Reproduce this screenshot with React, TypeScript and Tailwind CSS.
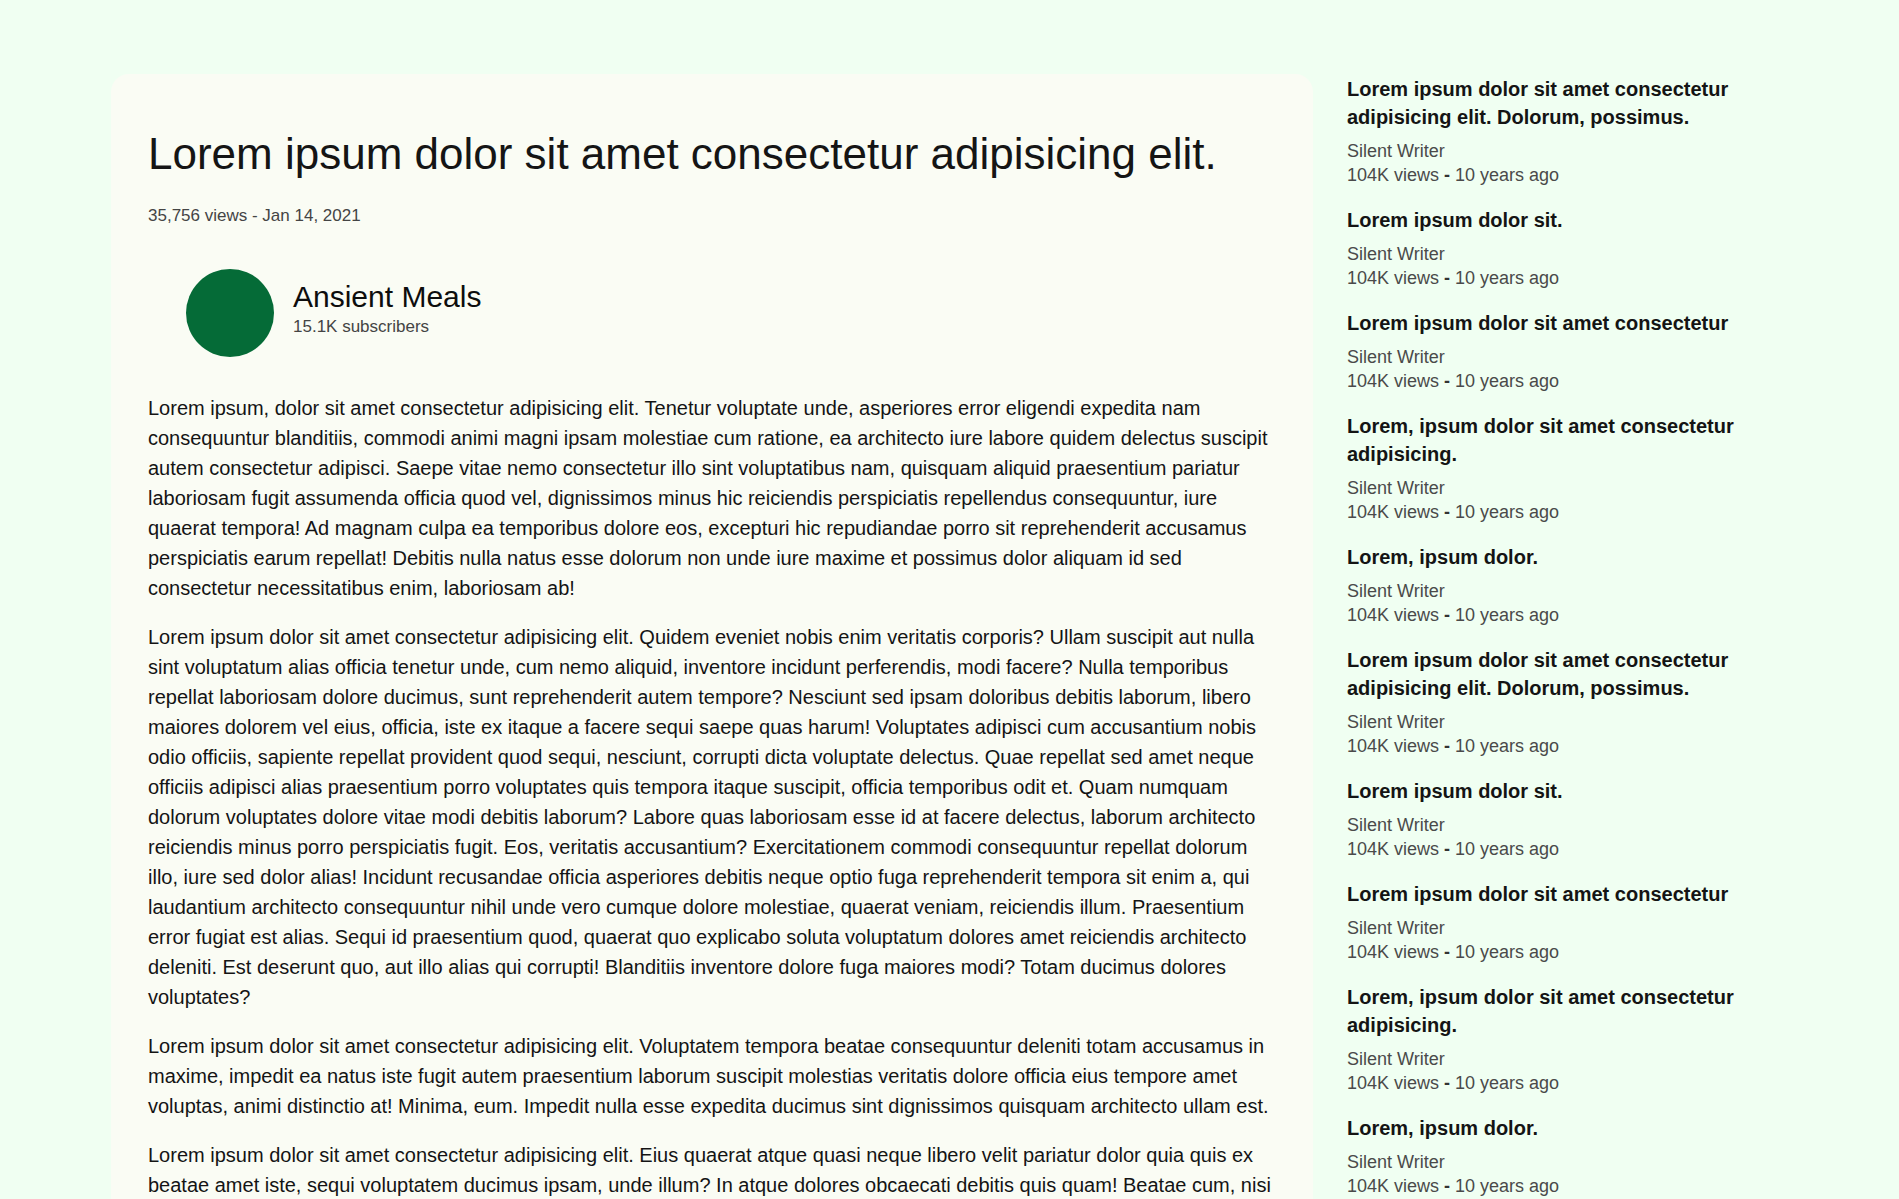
import React from "react";

const paragraphs = [
  "Lorem ipsum, dolor sit amet consectetur adipisicing elit. Tenetur voluptate unde, asperiores error eligendi expedita nam consequuntur blanditiis, commodi animi magni ipsam molestiae cum ratione, ea architecto iure labore quidem delectus suscipit autem consectetur adipisci. Saepe vitae nemo consectetur illo sint voluptatibus nam, quisquam aliquid praesentium pariatur laboriosam fugit assumenda officia quod vel, dignissimos minus hic reiciendis perspiciatis repellendus consequuntur, iure quaerat tempora! Ad magnam culpa ea temporibus dolore eos, excepturi hic repudiandae porro sit reprehenderit accusamus perspiciatis earum repellat! Debitis nulla natus esse dolorum non unde iure maxime et possimus dolor aliquam id sed consectetur necessitatibus enim, laboriosam ab!",
  "Lorem ipsum dolor sit amet consectetur adipisicing elit. Quidem eveniet nobis enim veritatis corporis? Ullam suscipit aut nulla sint voluptatum alias officia tenetur unde, cum nemo aliquid, inventore incidunt perferendis, modi facere? Nulla temporibus repellat laboriosam dolore ducimus, sunt reprehenderit autem tempore? Nesciunt sed ipsam doloribus debitis laborum, libero maiores dolorem vel eius, officia, iste ex itaque a facere sequi saepe quas harum! Voluptates adipisci cum accusantium nobis odio officiis, sapiente repellat provident quod sequi, nesciunt, corrupti dicta voluptate delectus. Quae repellat sed amet neque officiis adipisci alias praesentium porro voluptates quis tempora itaque suscipit, officia temporibus odit et. Quam numquam dolorum voluptates dolore vitae modi debitis laborum? Labore quas laboriosam esse id at facere delectus, laborum architecto reiciendis minus porro perspiciatis fugit. Eos, veritatis accusantium? Exercitationem commodi consequuntur repellat dolorum illo, iure sed dolor alias! Incidunt recusandae officia asperiores debitis neque optio fuga reprehenderit tempora sit enim a, qui laudantium architecto consequuntur nihil unde vero cumque dolore molestiae, quaerat veniam, reiciendis illum. Praesentium error fugiat est alias. Sequi id praesentium quod, quaerat quo explicabo soluta voluptatum dolores amet reiciendis architecto deleniti. Est deserunt quo, aut illo alias qui corrupti! Blanditiis inventore dolore fuga maiores modi? Totam ducimus dolores voluptates?",
  "Lorem ipsum dolor sit amet consectetur adipisicing elit. Voluptatem tempora beatae consequuntur deleniti totam accusamus in maxime, impedit ea natus iste fugit autem praesentium laborum suscipit molestias veritatis dolore officia eius tempore amet voluptas, animi distinctio at! Minima, eum. Impedit nulla esse expedita ducimus sint dignissimos quisquam architecto ullam est.",
  "Lorem ipsum dolor sit amet consectetur adipisicing elit. Eius quaerat atque quasi neque libero velit pariatur dolor quia quis ex beatae amet iste, sequi voluptatem ducimus ipsam, unde illum? In atque dolores obcaecati debitis quis quam! Beatae cum, nisi similique magnam laboriosam dolorem quas ipsa accusantium, totam minus modi asperiores officiis nemo! Quod, voluptates.",
];

const titles = [
  "Lorem ipsum dolor sit amet consectetur adipisicing elit. Dolorum, possimus.",
  "Lorem ipsum dolor sit.",
  "Lorem ipsum dolor sit amet consectetur",
  "Lorem, ipsum dolor sit amet consectetur adipisicing.",
  "Lorem, ipsum dolor.",
];

const items = [...titles, ...titles, ...titles];

export default function App() {
  return (
    <div
      className="h-[1199px] overflow-hidden bg-[#f0fff2] text-[#111111]"
      style={{ fontFamily: '"Liberation Sans", Arial, sans-serif' }}
    >
      <div className="flex items-start pl-[111px] pt-[74px]">
        <main className="w-[1202px] shrink-0 rounded-[18px] bg-[#fafcf4] px-[37px] pt-[55px] pb-10">
          <h1 className="text-[44px] leading-[50px] font-normal text-[#151515]">
            Lorem ipsum dolor sit amet consectetur adipisicing elit.
          </h1>
          <div className="mt-[27px] text-[17px] leading-[20px] text-[#444444]">
            35,756 views - Jan 14, 2021
          </div>
          <div className="mt-[43px] ml-[38px] flex items-start gap-[19px]">
            <div className="h-[88px] w-[88px] shrink-0 rounded-full bg-[#056b37]" />
            <div className="pt-[11px]">
              <div className="text-[30px] leading-[34px] text-[#0d0d0d]">Ansient Meals</div>
              <div className="mt-[3px] text-[17px] leading-[20px] text-[#444444]">
                15.1K subscribers
              </div>
            </div>
          </div>
          <div className="mt-[36px] flex flex-col gap-[19px]">
            {paragraphs.map((p, i) => (
              <p key={i} className="text-[20px] leading-[30px] text-[#141414]">
                {p}
              </p>
            ))}
          </div>
        </main>
        <aside className="ml-[34px] w-[440px] shrink-0 pt-[1px]">
          <div className="flex flex-col gap-[19px]">
            {items.map((t, i) => (
              <div key={i}>
                <h3 className="text-[20px] leading-[28px] font-bold text-[#141414]">{t}</h3>
                <div className="mt-[8px] text-[18px] leading-[24px] text-[#4a4a4a]">
                  <div>Silent Writer</div>
                  <div>
                    104K views <b className="font-bold text-[#333333]">-</b> 10 years ago
                  </div>
                </div>
              </div>
            ))}
          </div>
        </aside>
      </div>
    </div>
  );
}
